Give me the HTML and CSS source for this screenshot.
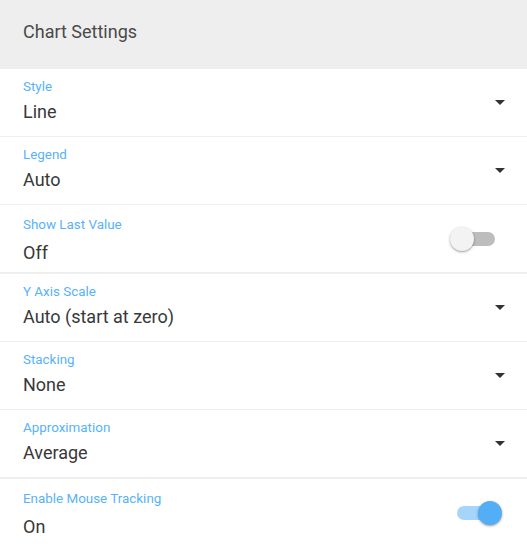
FILE: index.html
```html
<!DOCTYPE html>
<html>
<head>
<meta charset="utf-8">
<title>Chart Settings</title>
<link rel="stylesheet" href="styles.css">
</head>
<body>
<div class="panel">
  <div class="header"><span class="title">Chart Settings</span></div>
  <div class="row select">
    <div class="field"><div class="label">Style</div><div class="value">Line</div></div>
    <span class="arrow"></span>
  </div>
  <div class="row select">
    <div class="field"><div class="label">Legend</div><div class="value">Auto</div></div>
    <span class="arrow"></span>
  </div>
  <div class="row toggle thick">
    <div class="field"><div class="label">Show Last Value</div><div class="value">Off</div></div>
    <span class="switch"><span class="track"></span><span class="thumb"></span></span>
  </div>
  <div class="row select">
    <div class="field"><div class="label">Y Axis Scale</div><div class="value">Auto (start at zero)</div></div>
    <span class="arrow"></span>
  </div>
  <div class="row select">
    <div class="field"><div class="label">Stacking</div><div class="value">None</div></div>
    <span class="arrow"></span>
  </div>
  <div class="row select thick">
    <div class="field"><div class="label">Approximation</div><div class="value">Average</div></div>
    <span class="arrow"></span>
  </div>
  <div class="row toggle last">
    <div class="field"><div class="label">Enable Mouse Tracking</div><div class="value">On</div></div>
    <span class="switch on"><span class="track"></span><span class="thumb"></span></span>
  </div>
</div>
</body>
</html>
```
FILE: styles.css
```css
* { box-sizing: border-box; }
html, body { margin: 0; padding: 0; background: #fff; }
body { font-family: Roboto, "Noto Sans", "Liberation Sans", sans-serif; }

.panel { width: 527px; }

.header {
  height: 69px;
  background: #eeeeee;
  display: flex;
  align-items: center;
  padding: 0 23px 6px;
}
.title { font-size: 18px; line-height: 22px; color: #4a4a4a; }

.row {
  height: 68px;
  display: flex;
  align-items: center;
  padding: 0 22px 0 23px;
  border-bottom: 1px solid #eeeeee;
}
.row.thick { height: 69px; border-bottom-width: 2px; }
.row.last { border-bottom: none; height: 67px; }

.field { flex: 1; align-self: flex-start; padding-top: 10px; }
.toggle .field { padding-top: 12px; }

.label { font-size: 13.4px; line-height: 16px; color: #58b2fa; }
.value { font-size: 18px; line-height: 22px; color: #383838; margin-top: 6px; }
.toggle .value { margin-top: 9px; }

.arrow {
  width: 0; height: 0;
  border-left: 5.5px solid transparent;
  border-right: 5.5px solid transparent;
  border-top: 5.5px solid #333;
}

.switch {
  position: relative;
  width: 52px;
  height: 24px;
  margin-right: 3px;
}
.track {
  position: absolute;
  left: 7px; right: 7px; top: 5px;
  height: 14px;
  border-radius: 7px;
  background: #bdbdbd;
}
.thumb {
  position: absolute;
  left: 0; top: 0;
  width: 24px; height: 24px;
  border-radius: 50%;
  background: #f3f3f3;
  box-shadow: 0 1px 3px rgba(0,0,0,0.3), 0 1px 1px rgba(0,0,0,0.12);
}
.switch.on .track { background: #a6d5fb; }
.switch.on .thumb { left: 28px; background: #53aef8; }
```
